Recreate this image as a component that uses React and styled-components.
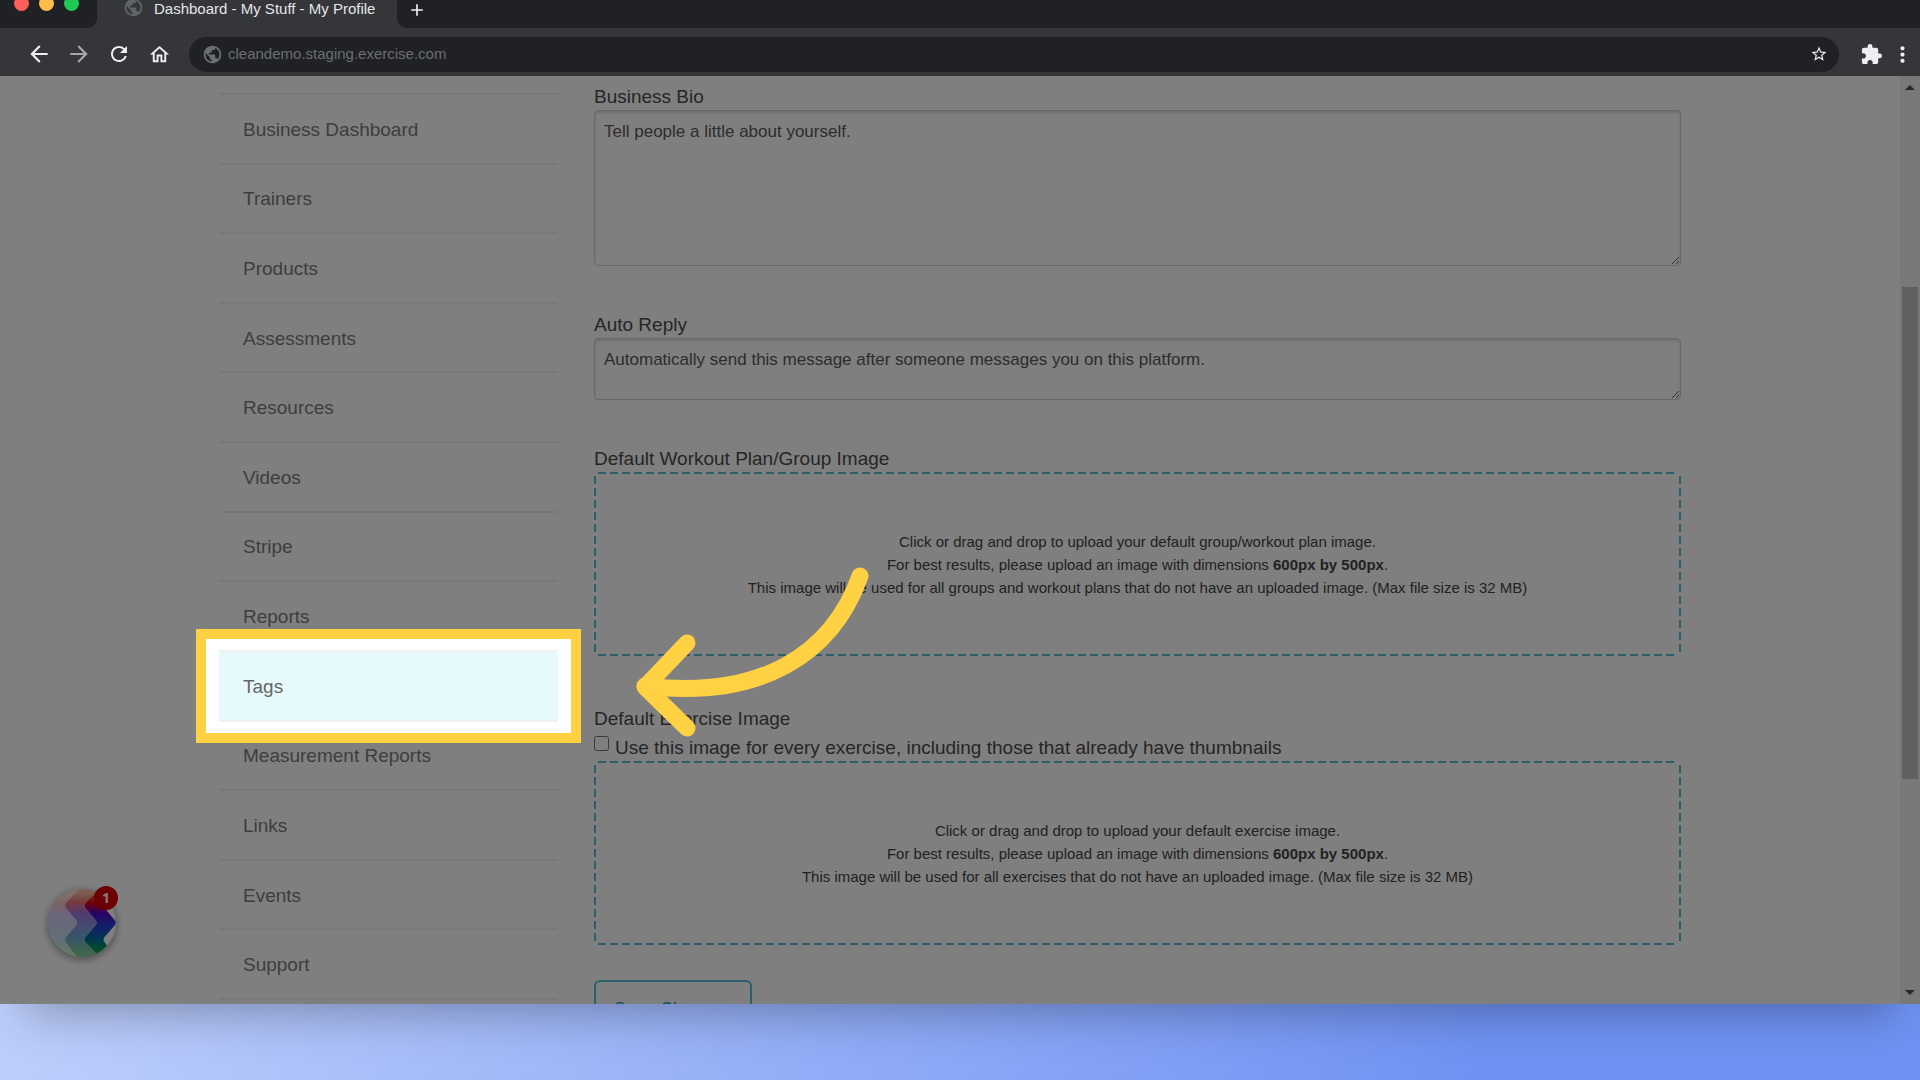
import React from "react";
import styled, { createGlobalStyle } from "styled-components";
import {
  MdAdd,
  MdArrowBack,
  MdArrowForward,
  MdExtension,
  MdMoreVert,
  MdOutlineHome,
  MdPublic,
  MdRefresh,
  MdStarOutline,
} from "react-icons/md";

const yellow = "#ffd143";
const teal = "#56c0d6";

const GlobalStyle = createGlobalStyle`
  *, *::before, *::after { box-sizing: border-box; }
  body {
    margin: 0;
    font-family: "Liberation Sans", Arial, Helvetica, sans-serif;
  }
`;

const Desktop = styled.div`
  display: flex;
  flex-direction: column;
  height: 100vh;
  padding-bottom: 76px;
  overflow: hidden;
  background: linear-gradient(105deg, #c4d3fc 0%, #bccdfb 14%, #6e92f3 80%);
`;

const BrowserWindow = styled.div`
  flex: 1;
  min-height: 0;
  display: flex;
  flex-direction: column;
  box-shadow: 0 34px 44px -26px rgba(0, 0, 0, 0.3);
`;

const TabStrip = styled.div`
  display: flex;
  height: 28px;
  overflow: hidden;
  background: #35363a;
  flex: none;
`;

const StripStart = styled.div`
  display: flex;
  gap: 10px;
  width: 97px;
  padding-left: 14px;
  background: #202124;
  border-bottom-right-radius: 10px;
`;

const Light = styled.span`
  width: 15px;
  height: 15px;
  margin-top: -4px;
  border-radius: 50%;
  background: ${(p) => p.$color};
`;

const Tab = styled.div`
  display: flex;
  gap: 10px;
  width: 300px;
  padding-left: 26px;
  font-size: 15px;
  line-height: 18px;
  color: #e4e5e8;
  white-space: nowrap;

  svg {
    margin-top: -3px;
    color: #5f6368;
  }
`;

const StripEnd = styled.div`
  flex: 1;
  padding-left: 10px;
  background: #202124;
  border-bottom-left-radius: 10px;
`;

const IconButton = styled.button`
  display: flex;
  align-items: center;
  justify-content: center;
  flex: none;
  width: ${(p) => p.$width || 40}px;
  padding: 0;
  border: 0;
  background: none;
  color: ${(p) => p.$color || "#eeeff1"};
`;

const Toolbar = styled.div`
  display: flex;
  align-items: center;
  flex: none;
  height: 48px;
  padding: 4px 3px 0 19px;
  background: #35363a;
`;

const AddressBar = styled.div`
  flex: 1;
  display: flex;
  align-items: center;
  gap: 5px;
  height: 35px;
  margin: 0 16px 0 10px;
  padding: 0 10px 0 13px;
  border-radius: 18px;
  background: #202124;
  color: #6b6e73;
`;

const AddressInput = styled.input`
  flex: 1;
  min-width: 0;
  padding: 0 0 2px;
  border: 0;
  outline: 0;
  background: none;
  color: #6b6e73;
  font: 15px "Liberation Sans", Arial, sans-serif;
`;

const Viewport = styled.div`
  position: relative;
  flex: 1;
  min-height: 0;
  display: flex;
  overflow: hidden;
  background: #fff;
`;

const Page = styled.main`
  flex: 1;
  min-width: 0;
`;

const Content = styled.div`
  display: flex;
  align-items: flex-start;
  gap: 36px;
  max-width: 1462px;
  margin: 0 auto;
`;

const Sidebar = styled.nav`
  flex: none;
  width: 339px;
  padding-top: 17px;
`;

const NavList = styled.ul`
  display: grid;
  grid-auto-rows: 1fr;
  height: 907px;
  margin: 0;
  padding: 0;
  list-style: none;
  border-top: 2px solid #f0f0f0;
`;

const NavItem = styled.li`
  position: relative;
  display: flex;
  border-bottom: 2px solid #f0f0f0;
  background: ${(p) => (p.$active ? "#e6f9fc" : "transparent")};
`;

const NavLink = styled.a`
  flex: 1;
  display: flex;
  align-items: center;
  padding: 2px 0 0 24px;
  color: ${(p) => (p.$active ? "#666" : "#7c7c7c")};
  font-size: 19px;
  text-decoration: none;
`;

/* Ring round the active entry; its spread shadow dims the rest of the page. */
const Spotlight = styled.div`
  position: absolute;
  z-index: 2;
  inset: -23px;
  border: 10px solid ${yellow};
  box-shadow: 0 0 0 3000px rgba(0, 0, 0, 0.5);
  pointer-events: none;
`;

const Arrow = styled.svg`
  position: absolute;
  left: 424px;
  top: -79px;
  width: 250px;
  height: 190px;
  fill: none;
  stroke: ${yellow};
  stroke-width: 17px;
  stroke-linecap: round;
  stroke-linejoin: round;
`;

const Form = styled.form`
  flex: 1;
  min-width: 0;
  padding-top: 8px;
  color: #4c4c4c;
`;

const Field = styled.div`
  margin-bottom: ${(p) => p.$after || 46}px;
`;

const Label = styled.label`
  display: block;
  font-size: 19px;
  line-height: 26px;
`;

const CheckRow = styled.div`
  display: flex;
  gap: 6px;
  padding-top: 3px;

  input {
    width: 15px;
    height: 15px;
    margin: 1px 0 0;
  }
`;

const TextArea = styled.textarea`
  display: block;
  width: 100%;
  height: ${(p) => p.$height}px;
  padding: 9px;
  border: 1px solid #d0d0d0;
  border-radius: 4px;
  box-shadow: inset 0 2px 3px rgba(0, 0, 0, 0.14);
  background: #fff;
  font: 17px/24px "Liberation Sans", Arial, sans-serif;
  resize: vertical;

  &::placeholder {
    color: #5a5a5a;
    opacity: 1;
  }
`;

const dashes = (angle) =>
  `repeating-linear-gradient(${angle}, ${teal} 0 8px, transparent 8px 12px)`;

const DropZone = styled.button`
  display: flex;
  flex-direction: column;
  align-items: center;
  justify-content: center;
  width: 100%;
  height: 184px;
  padding: 0;
  border: 0;
  color: #444;
  font: 15px/23px "Liberation Sans", Arial, sans-serif;
  background-color: #fff;
  background-image: ${dashes("90deg")}, ${dashes("90deg")}, ${dashes("180deg")}, ${dashes("180deg")};
  background-size: calc(100% - 8px) 2px, calc(100% - 8px) 2px, 2px calc(100% - 8px), 2px calc(100% - 8px);
  background-position: center top, center bottom, left center, right center;
  background-repeat: no-repeat;
`;

const SaveButton = styled.button`
  height: 58px;
  margin-top: -15px;
  padding: 0 18px;
  border: 2px solid ${teal};
  border-radius: 6px;
  background: #fff;
  color: #2f9fb8;
  font: 18px "Liberation Sans", Arial, sans-serif;
`;

const ScrollTrack = styled.div`
  display: flex;
  flex-direction: column;
  align-items: center;
  justify-content: space-between;
  flex: none;
  width: 20px;
  padding: 9px 0;
  background: #f1f1f1;
`;

const ScrollThumb = styled.div`
  flex: 0 1 492px;
  width: 16px;
  background: #c1c1c1;
  margin-bottom: 14px;
`;

const Triangle = styled.span`
  width: 0;
  height: 0;
  border: 5px solid transparent;
  border-width: ${(p) => (p.$down ? "5px 5px 0" : "0 5px 5px")};
  border-top-color: ${(p) => (p.$down ? "#505050" : "transparent")};
  border-bottom-color: ${(p) => (p.$down ? "transparent" : "#505050")};
`;

const ChatButton = styled.button`
  position: absolute;
  left: 48px;
  bottom: 47px;
  width: 68px;
  height: 68px;
  padding: 0;
  border: 0;
  border-radius: 50%;
  background: #fff;
  box-shadow: 0 2px 8px rgba(0, 0, 0, 0.45);

  svg {
    display: block;
    border-radius: 50%;
  }
`;

const Badge = styled.span`
  position: absolute;
  top: -3px;
  right: -2px;
  width: 24px;
  height: 24px;
  border-radius: 50%;
  background: #d80000;
  color: #fff;
  font: bold 14px/24px "Open Sans", sans-serif;
  text-align: center;
`;

const navItems = [
  "Business Dashboard",
  "Trainers",
  "Products",
  "Assessments",
  "Resources",
  "Videos",
  "Stripe",
  "Reports",
  "Tags",
  "Measurement Reports",
  "Links",
  "Events",
  "Support",
];

function ZigzagLogo() {
  return (
    <svg width="68" height="68" viewBox="0 0 68 68" aria-hidden="true">
      <defs>
        <linearGradient id="zigzag" x1="0" y1="0" x2="0" y2="68" gradientUnits="userSpaceOnUse">
          <stop offset="0.06" stopColor="#f08050" />
          <stop offset="0.2" stopColor="#e00010" />
          <stop offset="0.36" stopColor="#5008c8" />
          <stop offset="0.52" stopColor="#3038d8" />
          <stop offset="0.72" stopColor="#0068a8" />
          <stop offset="0.86" stopColor="#009060" />
          <stop offset="1" stopColor="#20b040" />
        </linearGradient>
      </defs>
      <g fill="url(#zigzag)">
        <path
          opacity="0.22"
          d="M0 0H31L18 14Q16 16.500 18 19L28.500 31.500Q30 33.800 28.500 36L18 48Q16 50.500 18 53L30 68H0Z"
        />
        <path
          opacity="0.55"
          d="M31 0L18 14Q16 16.500 18 19L28.500 31.500Q30 33.800 28.500 36L18 48Q16 50.500 18 53L29 68H46L49 64L37.500 53Q35.500 50.500 37.500 48L48 36Q49.500 33.800 48 31.500L37.500 19Q35.500 16.500 37.500 14L51 0Z"
        />
        <path d="M51 0L37.500 14Q35.500 16.500 37.500 19L48 31.500Q49.500 33.800 48 36L37.500 48Q35.500 50.500 37.500 53L50 66L59 57L56.500 53Q54.500 50.500 56.500 48L67 36Q68.500 33.800 67 31.500L56.500 19L60 0Z" />
      </g>
    </svg>
  );
}

function BrowserChrome() {
  return (
    <>
      <TabStrip>
        <StripStart>
          <Light $color="#ff5f57" />
          <Light $color="#febc48" />
          <Light $color="#1ec956" />
        </StripStart>
        <Tab>
          <MdPublic size={21} />
          <span>Dashboard - My Stuff - My Profile</span>
        </Tab>
        <StripEnd>
          <IconButton $width={20} aria-label="New tab">
            <MdAdd size={20} />
          </IconButton>
        </StripEnd>
      </TabStrip>
      <Toolbar>
        <IconButton aria-label="Back">
          <MdArrowBack size={26} />
        </IconButton>
        <IconButton aria-label="Forward" $color="#a5a7aa">
          <MdArrowForward size={26} />
        </IconButton>
        <IconButton aria-label="Reload">
          <MdRefresh size={24} />
        </IconButton>
        <IconButton aria-label="Home">
          <MdOutlineHome size={23} />
        </IconButton>
        <AddressBar>
          <MdPublic size={21} />
          <AddressInput aria-label="Address" defaultValue="cleandemo.staging.exercise.com" />
          <IconButton $width={20} aria-label="Bookmark">
            <MdStarOutline size={18} />
          </IconButton>
        </AddressBar>
        <IconButton $width={32} aria-label="Extensions">
          <MdExtension size={23} />
        </IconButton>
        <IconButton $width={30} aria-label="Menu">
          <MdMoreVert size={25} />
        </IconButton>
      </Toolbar>
    </>
  );
}

function UploadBox({ id, first, last }) {
  return (
    <DropZone type="button" id={id}>
      <span>{first}</span>
      <span>
        For best results, please upload an image with dimensions <b>600px by 500px</b>.
      </span>
      <span>{last}</span>
    </DropZone>
  );
}

function ProfileForm() {
  return (
    <Form onSubmit={(e) => e.preventDefault()}>
      <Field>
        <Label htmlFor="bio">Business Bio</Label>
        <TextArea id="bio" $height={156} placeholder="Tell people a little about yourself." />
      </Field>
      <Field>
        <Label htmlFor="reply">Auto Reply</Label>
        <TextArea
          id="reply"
          $height={62}
          placeholder="Automatically send this message after someone messages you on this platform."
        />
      </Field>
      <Field $after={50}>
        <Label htmlFor="plan-image">Default Workout Plan/Group Image</Label>
        <UploadBox
          id="plan-image"
          first="Click or drag and drop to upload your default group/workout plan image."
          last="This image will be used for all groups and workout plans that do not have an uploaded image. (Max file size is 32 MB)"
        />
      </Field>
      <Field $after={50}>
        <Label htmlFor="exercise-image">Default Exercise Image</Label>
        <CheckRow>
          <input type="checkbox" id="every" />
          <Label htmlFor="every">
            Use this image for every exercise, including those that already have thumbnails
          </Label>
        </CheckRow>
        <UploadBox
          id="exercise-image"
          first="Click or drag and drop to upload your default exercise image."
          last="This image will be used for all exercises that do not have an uploaded image. (Max file size is 32 MB)"
        />
      </Field>
      <SaveButton type="submit">Save Changes</SaveButton>
    </Form>
  );
}

export default function App() {
  return (
    <Desktop>
      <GlobalStyle />
      <BrowserWindow>
        <BrowserChrome />
        <Viewport>
          <Page>
            <Content>
              <Sidebar>
                <NavList>
                  {navItems.map((name) => {
                    const active = name === "Tags";
                    return (
                      <NavItem key={name} $active={active}>
                        <NavLink href="#" $active={active}>
                          {name}
                        </NavLink>
                        {active && (
                          <Spotlight>
                            <Arrow viewBox="630 560 250 190" aria-hidden="true">
                              <path d="M860 576C832 655 760 700 645 686" />
                              <path d="M687 643L645 687L687 728" />
                            </Arrow>
                          </Spotlight>
                        )}
                      </NavItem>
                    );
                  })}
                </NavList>
              </Sidebar>
              <ProfileForm />
            </Content>
          </Page>
          <ScrollTrack>
            <Triangle />
            <ScrollThumb />
            <Triangle $down />
          </ScrollTrack>
          <ChatButton aria-label="Open chat, 1 unread">
            <ZigzagLogo />
            <Badge>1</Badge>
          </ChatButton>
        </Viewport>
      </BrowserWindow>
    </Desktop>
  );
}
